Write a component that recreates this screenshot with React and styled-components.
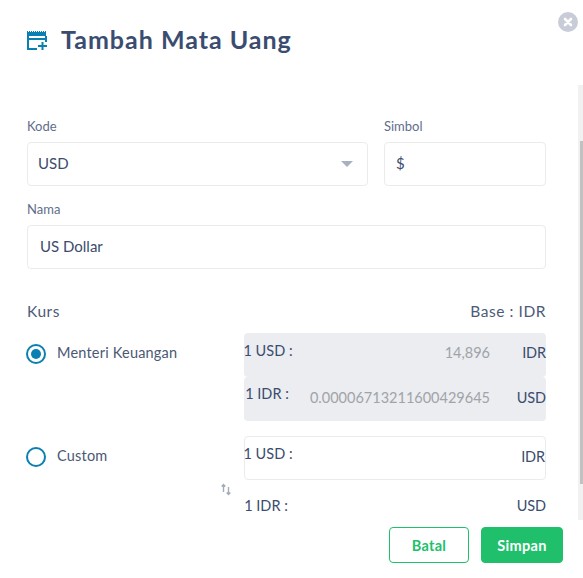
import React from 'react';
import styled, { createGlobalStyle } from 'styled-components';

const Global = createGlobalStyle`
  html, body { margin: 0; padding: 0; background: #fff; }
  body { font-family: "Lato", "Noto Sans", sans-serif; color: #3b4c6e; }
  * { box-sizing: border-box; }
`;
const Modal = styled.div`
  width: 583px; height: 578px; position: relative; background: #fff; overflow: hidden;
  display: flex; flex-direction: column;
`;
const Header = styled.div`
  height: 85px; padding: 24px 27px 0; display: flex; align-items: flex-start; gap: 14px; flex: none;
`;
const Icon = styled.svg`margin-top: 7px; flex: none;`;
const Title = styled.h1`
  margin: 0; font-size: 25px; line-height: 30px; font-weight: 700; color: #3a4d70; letter-spacing: 1px;
`;
const Close = styled.div`
  position: absolute; top: 12px; left: 558px; width: 20px; height: 20px; border-radius: 50%;
  background: #c8ccd6; display: flex; align-items: center; justify-content: center;
`;
const Track = styled.div`
  position: absolute; left: 578px; top: 85px; width: 5px; height: 435px; background: #f1f1f1;
`;
const Thumb = styled.div`
  margin-top: 56px; height: 343px; background: #c1c1c1; width: 3px; margin-left: 2px;
`;
const Body = styled.div`
  flex: 1; padding: 33px 37px 0 27px; display: flex; flex-direction: column; min-height: 0; overflow: hidden;
`;
const Row = styled.div`display: flex; gap: 16px;`;
const Field = styled.div`
  width: ${p => p.$w}px; display: flex; flex-direction: column; margin-bottom: ${p => p.$mb || 0}px;
`;
const Label = styled.label`font-size: 13px; line-height: 16px; color: #5f6d8a; margin-bottom: 8px;`;
const Input = styled.div`
  height: 44px; border: 1px solid #ebebeb; border-radius: 4px; padding: 0 12px 2px ${p => p.$pl}px; display: flex;
  align-items: center; justify-content: space-between; font-size: 15px; color: #3b4c6e; background: #fff;
`;
const Caret = styled.span`
  width: 0; height: 0; border-left: 6px solid transparent; border-right: 6px solid transparent;
  border-top: 6px solid #a9b0bf; margin: 2px 2px 0 0;
`;
const KursHead = styled.div`
  display: flex; justify-content: space-between; font-size: 15.5px; line-height: 20px; color: #4c5a78;
  margin-top: 32px; letter-spacing: 0.55px;
`;
const Rate = styled.div`display: flex; margin-top: ${p => p.$mt}px; position: relative;`;
const Option = styled.div`
  width: 218px; display: flex; align-items: flex-start; gap: 11px; font-size: 14.5px; line-height: 20px; color: #4a5875;
  margin-left: -1px; padding-top: 10px; flex: none; letter-spacing: 0.2px;
`;
const Radio = styled.span`
  width: 20px; height: 20px; border-radius: 50%; border: 2px solid #0a7fb1; flex: none; display: flex;
  align-items: center; justify-content: center; margin-top: 1px;
  &::after { content: ''; width: 10px; height: 10px; border-radius: 50%; background: ${p => p.$on ? '#0a7fb1' : 'transparent'}; }
`;
const Column = styled.div`flex: 1; display: flex; flex-direction: column; min-width: 0;`;
const Line = styled.div`
  height: 44px; display: flex; align-items: flex-start; font-size: 14.5px;
  line-height: 20px; color: #3b4c6e; border-radius: 4px;
  background: ${p => p.$filled ? '#ebedf1' : '#fff'};
  border: ${p => p.$outlined ? '1px solid #ebebeb' : '0'};
  padding-top: ${p => p.$pt}px;
`;
const Prefix = styled.span`
  flex: none; width: 48px; white-space: nowrap; display: flex; justify-content: center; margin-left: ${p => p.$ml || 0}px;
`;
const Figures = styled.div`flex: 1; display: flex; min-width: 0; margin-top: ${p => p.$dy}px;`;
const Value = styled.span`flex: 1; text-align: right; color: #a0a3a8;`;
const Unit = styled.span`flex: none; width: 56px; text-align: right; letter-spacing: -0.1px;`;
const Swap = styled.span`
  position: absolute; left: 194px; top: 47px; color: #a3acbb; display: flex;
`;
const Footer = styled.div`
  flex: none; height: 58px; background: #fff; display: flex; justify-content: flex-end; gap: 12px; padding: 7px 20px 0 0;
`;
const Button = styled.button`
  width: ${p => p.$w}px; height: 36px; border-radius: 4px; border: 1px solid #20bf6b; font: 700 14.5px "Lato", sans-serif;
  letter-spacing: 0.3px; background: ${p => p.$primary ? '#20bf6b' : '#fff'}; color: ${p => p.$primary ? '#fff' : '#20bf6b'}; padding: 0;
`;

export default function App() {
  return (
    <Modal>
      <Global />
      <Header>
        <Icon width="20" height="19" viewBox="0 0 20 19">
          <path fill="#0a7fb1" d="M0 1V0h1v1h1V0h1v1h1V0h1v1h1V0h1v1h1V0h1v1h1V0h1v1h1V0h1v1h1V0h1v1h1V0h1v1h1V0h1v1v4H0z" />
          <path fill="#0a7fb1" d="M0 5h2v2h16V5h2v6h-2V9H2v8h8v2H0z" />
          <path fill="#0a7fb1" d="M14.500 11h2v3H20v2h-3.500v3h-2v-3H11v-2h3.500z" />
        </Icon>
        <Title>Tambah Mata Uang</Title>
      </Header>
      <Close>
        <svg width="10" height="10" viewBox="0 0 10 10"><path d="M2 2l6 6M8 2l-6 6" stroke="#fff" strokeWidth="2.6" strokeLinecap="round" /></svg>
      </Close>
      <Track><Thumb /></Track>
      <Body>
        <Row>
          <Field $w={341} $mb={15}>
            <Label>Kode</Label>
            <Input $pl={10}>USD<Caret /></Input>
          </Field>
          <Field $w={162}>
            <Label>Simbol</Label>
            <Input $pl={11}>$</Input>
          </Field>
        </Row>
        <Field $w={519}>
          <Label>Nama</Label>
          <Input $pl={12}>US Dollar</Input>
        </Field>
        <KursHead><span>Kurs</span><span>Base : IDR</span></KursHead>
        <Rate $mt={12}>
          <Option><Radio $on />Menteri Keuangan</Option>
          <Column>
            <Line $filled $pt={8}><Prefix>1 USD :</Prefix><Figures $dy={2}><Value>14,896</Value><Unit>IDR</Unit></Figures></Line>
            <Line $filled $pt={7}><Prefix $ml={-1}>1 IDR :</Prefix><Figures $dy={4}><Value>0.00006713211600429645</Value><Unit>USD</Unit></Figures></Line>
          </Column>
        </Rate>
        <Rate $mt={15}>
          <Option><Radio />Custom</Option>
          <Column>
            <Line $outlined $pt={7}><Prefix $ml={-1}>1 USD :</Prefix><Figures $dy={3}><Value /><Unit>IDR</Unit></Figures></Line>
            <Line $pt={16}><Prefix $ml={-2}>1 IDR :</Prefix><Figures $dy={0}><Value /><Unit>USD</Unit></Figures></Line>
          </Column>
          <Swap>
            <svg width="10" height="13" viewBox="0 0 10 13" fill="none" stroke="currentColor" strokeWidth="1.4"><path d="M2.500 9V1.500M0.700 3.500L2.500 1.500L4.300 3.500M7.500 4v7.500M5.700 9.500L7.500 11.500L9.300 9.500" /></svg>
          </Swap>
        </Rate>
      </Body>
      <Footer>
        <Button $w={80}>Batal</Button>
        <Button $primary $w={82}>Simpan</Button>
      </Footer>
    </Modal>
  );
}
